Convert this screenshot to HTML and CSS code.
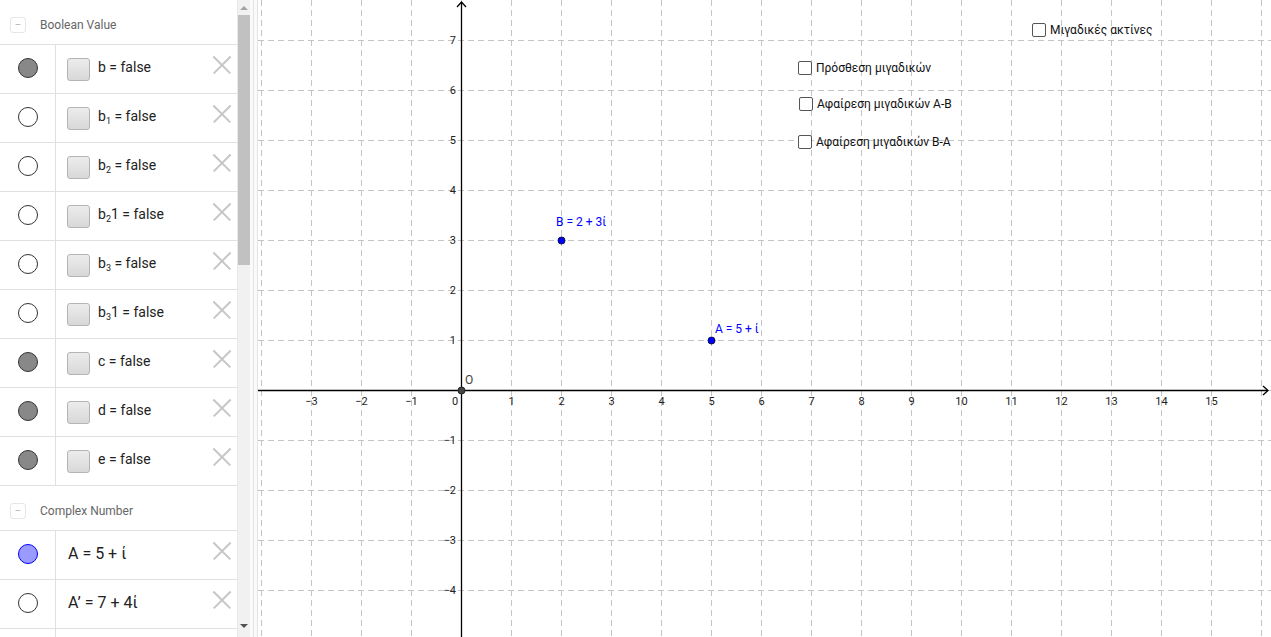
FILE: index.html
```html
<!DOCTYPE html>
<html>
<head>
<meta charset="utf-8">
<link rel="stylesheet" href="styles.css">
</head>
<body>
<div class="app">
  <aside class="sidebar">
    <div class="algebra">
      <div class="group-header"><span class="collapse">−</span><span class="group-title">Boolean Value</span></div>
      <div class="rows">
        <div class="row"><div class="vis"><span class="dot dot-grey"></span></div><div class="cell"><span class="cb"></span><span class="expr">b = false</span><span class="del"></span></div></div>
        <div class="row"><div class="vis"><span class="dot"></span></div><div class="cell"><span class="cb"></span><span class="expr">b<sub>1</sub> = false</span><span class="del"></span></div></div>
        <div class="row"><div class="vis"><span class="dot"></span></div><div class="cell"><span class="cb"></span><span class="expr">b<sub>2</sub> = false</span><span class="del"></span></div></div>
        <div class="row"><div class="vis"><span class="dot"></span></div><div class="cell"><span class="cb"></span><span class="expr">b<sub>2</sub>1 = false</span><span class="del"></span></div></div>
        <div class="row"><div class="vis"><span class="dot"></span></div><div class="cell"><span class="cb"></span><span class="expr">b<sub>3</sub> = false</span><span class="del"></span></div></div>
        <div class="row"><div class="vis"><span class="dot"></span></div><div class="cell"><span class="cb"></span><span class="expr">b<sub>3</sub>1 = false</span><span class="del"></span></div></div>
        <div class="row"><div class="vis"><span class="dot dot-grey"></span></div><div class="cell"><span class="cb"></span><span class="expr">c = false</span><span class="del"></span></div></div>
        <div class="row"><div class="vis"><span class="dot dot-grey"></span></div><div class="cell"><span class="cb"></span><span class="expr">d = false</span><span class="del"></span></div></div>
        <div class="row"><div class="vis"><span class="dot dot-grey"></span></div><div class="cell"><span class="cb"></span><span class="expr">e = false</span><span class="del"></span></div></div>
      </div>
      <div class="group-header"><span class="collapse">−</span><span class="group-title">Complex Number</span></div>
      <div class="rows">
        <div class="row"><div class="vis"><span class="dot dot-blue"></span></div><div class="cell"><span class="expr expr-big">A = 5 + ί</span><span class="del"></span></div></div>
        <div class="row"><div class="vis"><span class="dot"></span></div><div class="cell"><span class="expr expr-big">A’ = 7 + 4ί</span><span class="del"></span></div></div>
        <div class="row"><div class="vis"></div><div class="cell"></div></div>
      </div>
    </div>
    <div class="scrollbar">
      <div class="sb-arrow sb-up"></div>
      <div class="sb-track"><div class="sb-thumb"></div></div>
      <div class="sb-arrow sb-down"></div>
    </div>
  </aside>
  <div class="splitter"></div>
  <main class="graphics">
    <svg class="plot" width="1013" height="637" viewBox="258 0 1013 637">
      <g class="grid" id="grid"></g>
      <g class="axes">
        <line x1="258" y1="390.5" x2="1268" y2="390.5"/>
        <polyline points="1263,386 1268,390.5 1263,395" fill="none"/>
        <line x1="461.5" y1="637" x2="461.5" y2="2"/>
        <polyline points="457,7 461.5,2 466,7" fill="none"/>
      </g>
      <g class="ticks" id="ticks"></g>
      <circle class="pt-o" cx="461.5" cy="390.5" r="3.5"/>
      <text class="lbl-o" x="465" y="384">O</text>
      <circle class="pt" cx="561.5" cy="240.5" r="3.5"/>
      <text class="lbl-pt" x="556" y="226">B = 2 + 3ί</text>
      <circle class="pt" cx="711.5" cy="340.5" r="3.5"/>
      <text class="lbl-pt" x="715" y="333">A = 5 + ί</text>
    </svg>
    <label class="chk chk-rays"><span class="box"></span><span>Μιγαδικές ακτίνες</span></label>
    <label class="chk chk-add"><span class="box"></span><span>Πρόσθεση μιγαδικών</span></label>
    <label class="chk chk-subab"><span class="box"></span><span>Αφαίρεση μιγαδικών Α-Β</span></label>
    <label class="chk chk-subba"><span class="box"></span><span>Αφαίρεση μιγαδικών Β-Α</span></label>
  </main>
</div>
<script>
(function(){
  var ns = "http://www.w3.org/2000/svg";
  var grid = document.getElementById("grid");
  var ticks = document.getElementById("ticks");
  function line(x1,y1,x2,y2){
    var l = document.createElementNS(ns,"line");
    l.setAttribute("x1",x1);l.setAttribute("y1",y1);l.setAttribute("x2",x2);l.setAttribute("y2",y2);
    grid.appendChild(l);
  }
  for (var x = 261; x <= 1271; x += 50) line(x+0.5,0,x+0.5,637);
  for (var y = 40; y <= 637; y += 50) line(258,y+0.5,1271,y+0.5);
  function text(t,x,y,cls){
    var e = document.createElementNS(ns,"text");
    e.setAttribute("x",x);e.setAttribute("y",y);e.setAttribute("class",cls);
    e.textContent = t; ticks.appendChild(e);
  }
  for (var n = -3; n <= 15; n++) {
    if (n === 0) continue;
    text(n < 0 ? "\u2212" + (-n) : String(n), 461.5 + 50*n, 405, "tx");
  }
  text("0", 455, 405, "tx");
  for (var m = -4; m <= 7; m++) {
    if (m === 0) continue;
    text(m < 0 ? "\u2212" + (-m) : String(m), 456, 390 - 50*m + 4, "ty");
  }
})();
</script>
</body>
</html>
```

FILE: styles.css
```css
* { box-sizing: border-box; }
html, body { margin: 0; padding: 0; }
body {
  width: 1271px;
  height: 637px;
  overflow: hidden;
  background: #fff;
  font-family: Roboto, "Liberation Sans", sans-serif;
  color: #000;
}
.app {
  display: flex;
  height: 637px;
}
.sidebar {
  width: 250px;
  flex: none;
  display: flex;
  height: 637px;
  overflow: hidden;
}
.algebra {
  width: 237px;
  flex: none;
  overflow: hidden;
  height: 637px;
}
.group-header {
  height: 44px;
  display: flex;
  align-items: center;
  padding-left: 10px;
  padding-top: 5px;
}
.collapse {
  width: 16px;
  height: 16px;
  border: 1px solid #e6e6e6;
  border-radius: 3px;
  display: flex;
  align-items: center;
  justify-content: center;
  font-size: 12px;
  color: #bbb;
  line-height: 1;
}
.group-title {
  margin-left: 14px;
  font-size: 12px;
  color: #666;
}
.rows {
  border-bottom: 1px solid #e0e0e0;
}
.row {
  display: flex;
  height: 49px;
  border-top: 1px solid #e0e0e0;
}
.vis {
  width: 56px;
  flex: none;
  border-right: 1px solid #e0e0e0;
  display: flex;
  align-items: center;
  justify-content: center;
  padding-bottom: 3px;
}
.dot {
  width: 20px;
  height: 20px;
  border-radius: 50%;
  border: 1px solid #333;
  background: #fff;
}
.dot-grey { background: #888; }
.dot-blue { background: #9a9aff; border-color: #0000ff; }
.cell {
  flex: 1;
  display: flex;
  align-items: center;
  padding-left: 11px;
  padding-bottom: 2px;
  position: relative;
}
.cb {
  width: 23px;
  height: 23px;
  border: 1px solid #b4b4b4;
  border-radius: 3px;
  background: linear-gradient(#ececec, #d8d8d8);
  margin-right: 8px;
  margin-top: 2px;
  flex: none;
}
.expr {
  font-size: 14px;
  color: #222;
  white-space: nowrap;
  margin-bottom: 2px;
}
.expr sub {
  font-size: 9px;
  vertical-align: -3px;
  line-height: 0;
}
.expr-big {
  font-size: 16px;
  margin-left: 1px;
}
.del {
  position: absolute;
  right: 6px;
  top: 11px;
  width: 18px;
  height: 18px;
}
.del::before, .del::after {
  content: "";
  position: absolute;
  left: -3px;
  top: 8px;
  width: 24px;
  height: 1.5px;
  background: #c6c6c6;
  transform: rotate(45deg);
}
.del::after { transform: rotate(-45deg); }

.scrollbar {
  width: 13px;
  flex: none;
  background: #f1f1f1;
  display: flex;
  flex-direction: column;
  border-left: 1px solid #e8e8e8;
}
.sb-arrow {
  height: 15px;
  flex: none;
  display: flex;
  align-items: center;
  justify-content: center;
}
.sb-up::before {
  content: "";
  border-left: 4px solid transparent;
  border-right: 4px solid transparent;
  border-bottom: 4px solid #a3a3a3;
}
.sb-down::before {
  content: "";
  border-left: 4px solid transparent;
  border-right: 4px solid transparent;
  border-top: 4px solid #505050;
}
.sb-down { height: 22px; }
.sb-track {
  flex: 1;
}
.sb-thumb {
  height: 250px;
  background: #c1c1c1;
}
.splitter {
  width: 8px;
  flex: none;
  background: #fafafa;
  border-right: 1px solid #e4e4e4;
  position: relative;
}
.splitter::before {
  content: "";
  position: absolute;
  left: 3px;
  top: 0;
  bottom: 0;
  width: 1px;
  background: #e4e4e4;
}
.graphics {
  flex: 1;
  position: relative;
  height: 637px;
  overflow: hidden;
}
.plot {
  display: block;
}
.grid line {
  stroke: #c4c4c4;
  stroke-width: 1;
  stroke-dasharray: 6 4;
}
.axes line, .axes polyline {
  stroke: #000;
  stroke-width: 1.3;
}
.ticks text {
  font-family: Roboto, "Liberation Sans", sans-serif;
  font-size: 11px;
  fill: #222;
}
.tx { text-anchor: middle; }
.ty { text-anchor: end; }
.pt {
  fill: #0000ff;
  stroke: #101040;
  stroke-width: 1;
}
.pt-o {
  fill: #444;
  stroke: #222;
  stroke-width: 1;
}
.lbl-o {
  font-family: Roboto, "Liberation Sans", sans-serif;
  font-size: 12px;
  fill: #444;
}
.lbl-pt {
  font-family: Roboto, "Liberation Sans", sans-serif;
  font-size: 12px;
  fill: #0000ff;
}
.chk {
  position: absolute;
  display: flex;
  align-items: center;
  gap: 4px;
  font-size: 12px;
  color: #111;
  white-space: nowrap;
}
.chk .box {
  width: 14px;
  height: 14px;
  border: 1px solid #555;
  border-radius: 2px;
  background: #fff;
}
.chk-rays { left: 774px; top: 23px; }
.chk-add { left: 540px; top: 61px; }
.chk-subab { left: 541px; top: 97px; }
.chk-subba { left: 540px; top: 135px; }
```
